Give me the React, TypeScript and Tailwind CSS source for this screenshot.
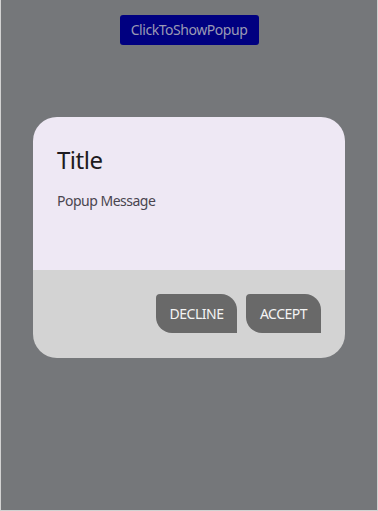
export default function App() {
  return (
    <div
      className="w-[378px] h-[511px] bg-[#75777a] border-x border-b border-[#d2d2d2] flex flex-col items-center"
      style={{ fontFamily: '"Noto Sans", "Open Sans", sans-serif' }}
    >
      <button className="mt-[15px] h-[30px] w-[139px] rounded-[3px] bg-[#000080] text-[#9a9ab4] text-[14px] tracking-[-0.45px] leading-[30px]">
        ClickToShowPopup
      </button>
      <div className="mt-[72px] w-[312px] rounded-[24px] overflow-hidden flex flex-col">
        <div className="bg-[#eee8f4] h-[153px] px-[24px] pt-[28px]">
          <div className="text-[24px] leading-[30px] tracking-[-0.5px] text-[#1d1b20]">Title</div>
          <div className="mt-[16px] text-[14px] leading-[20px] tracking-[-0.5px] text-[#49454f]">Popup Message</div>
        </div>
        <div className="bg-[#d3d3d3] h-[88px] flex justify-end items-start pt-[24px] pr-[24px] gap-[9px]">
          <button className="w-[81px] h-[39px] bg-[#696969] text-[#f4f4f4] text-[14px] tracking-[-0.5px] rounded-tl-[4px] rounded-tr-[16px] rounded-bl-[16px] rounded-br-none">
            DECLINE
          </button>
          <button className="w-[75px] h-[39px] bg-[#696969] text-[#f4f4f4] text-[14px] tracking-[-0.5px] rounded-tl-[4px] rounded-tr-[16px] rounded-bl-[16px] rounded-br-none">
            ACCEPT
          </button>
        </div>
      </div>
    </div>
  );
}
